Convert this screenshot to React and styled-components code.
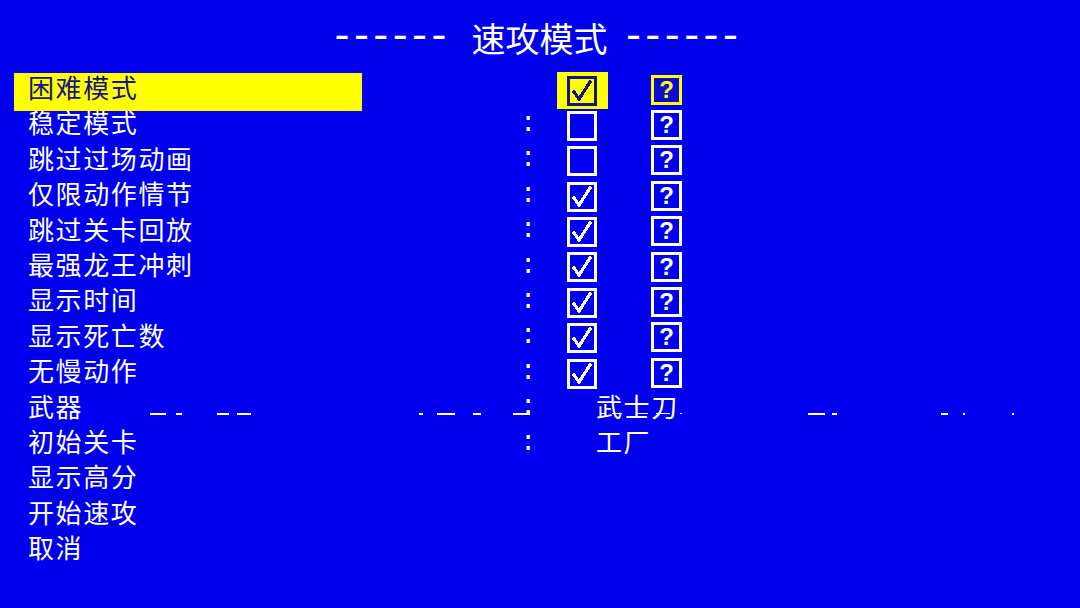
import React from "react";
import styled, { createGlobalStyle } from "styled-components";

const BLUE = "#0000ee";
const YELLOW = "#ffff00";
const NAVY = "#14148a";
const WHITE = "#ffffff";
const CJK = `"Noto Sans CJK SC", "Noto Sans", sans-serif`;

const Global = createGlobalStyle`
  html, body {
    margin: 0;
    padding: 0;
    background: ${BLUE};
  }
  body {
    font-family: ${CJK};
    overflow: hidden;
  }
`;

const Screen = styled.div`
  width: 1080px;
  height: 608px;
  background: ${BLUE};
  color: ${WHITE};
  display: flex;
  flex-direction: column;
`;

const Header = styled.header`
  display: flex;
  justify-content: flex-start;
  align-items: flex-start;
  padding: 21px 0 0 330px;
  height: 34px;
  margin-bottom: 17px;
`;

const Dashes = styled.span`
  font-family: "Liberation Mono", monospace;
  font-size: 40px;
  line-height: 34px;
  letter-spacing: -4.6px;
  white-space: nowrap;
  margin: ${(p) => (p.$side === "left" ? "0 25px 0 0" : "0 0 0 14px")};
`;

const Heading = styled.h1`
  margin: 0;
  font-family: ${CJK};
  font-weight: 400;
  font-size: 34px;
  line-height: 34px;
`;

const Menu = styled.div`
  display: flex;
  flex-direction: column;
`;

const Row = styled.div`
  position: relative;
  display: grid;
  grid-template-columns: 348px 152px 24px 19px 51px 43px 31px 1fr;
  grid-template-rows: 35.4px;
  padding-left: 14px;
  align-items: center;
`;

const Label = styled.div`
  grid-column: 1;
  align-self: start;
  height: 38px;
  margin-top: 1px;
  box-sizing: border-box;
  padding: 1px 0 0 14px;
  font-size: 26px;
  line-height: 26px;
  letter-spacing: 1.6px;
  white-space: nowrap;
  color: ${(p) => (p.$active ? NAVY : WHITE)};
  background: ${(p) => (p.$active ? YELLOW : "transparent")};
`;

const Colon = styled.span`
  grid-column: 3;
  text-align: center;
  font-family: "Liberation Mono", monospace;
  font-weight: 400;
  font-size: 27px;
  line-height: 27px;
  margin-left: 4px;
  margin-top: -1px;
`;

const CheckCell = styled.div`
  grid-column: 5;
  align-self: start;
  height: 37px;
  display: flex;
  align-items: center;
  justify-content: center;
  padding-right: 2px;
  background: ${(p) => (p.$active ? YELLOW : "transparent")};
`;

const Box = styled.div`
  width: 30px;
  height: 30px;
  box-sizing: border-box;
  border: 3px solid ${(p) => (p.$active ? NAVY : WHITE)};
  display: flex;
  align-items: center;
  justify-content: center;
  color: ${(p) => (p.$active ? NAVY : WHITE)};
`;

const HelpBox = styled.div`
  grid-column: 7;
  width: 31px;
  height: 30px;
  box-sizing: border-box;
  border: 3px solid ${(p) => (p.$active ? YELLOW : WHITE)};
  background: ${(p) => (p.$active ? "#0a0ad2" : "transparent")};
  color: ${(p) => (p.$active ? YELLOW : WHITE)};
  display: flex;
  align-items: center;
  justify-content: center;
  font-family: "Liberation Sans", sans-serif;
  font-weight: 700;
  font-size: 24px;
  line-height: 24px;
`;

const Value = styled.div`
  grid-column: 5 / -1;
  align-self: start;
  margin-top: 1px;
  padding: 1px 0 0 39px;
  font-size: 26px;
  line-height: 26px;
  letter-spacing: 1.6px;
  white-space: nowrap;
`;

const Glitch = styled.svg`
  position: absolute;
  left: 0;
  top: 20px;
  width: 1080px;
  height: 6px;
  pointer-events: none;
`;

const CheckMark = () => (
  <svg width="22" height="22" viewBox="0 0 22 22" shapeRendering="crispEdges">
    <polyline
      points="3,12 8,19 19,2"
      fill="none"
      stroke="currentColor"
      strokeWidth="3.2"
      strokeLinecap="square"
      strokeLinejoin="miter"
    />
  </svg>
);

const glitchSegments = [
  [150, 16, 2], [176, 6, 2], [217, 12, 2], [237, 14, 2],
  [419, 4, 2], [437, 18, 2], [473, 8, 2], [513, 17, 2],
  [600, 6, 1], [612, 10, 1], [636, 12, 1], [656, 14, 1], [680, 2, 1],
  [808, 17, 2], [832, 5, 2], [941, 7, 2], [963, 2, 2], [1012, 2, 2],
];

const GlitchLine = () => (
  <Glitch viewBox="0 0 1080 6" shapeRendering="crispEdges">
    {glitchSegments.map(([x, w, h], i) => (
      <rect key={i} x={x} y={2} width={w} height={h} fill={WHITE} />
    ))}
  </Glitch>
);

const rows = [
  { label: "困难模式", check: true, active: true, colon: false },
  { label: "稳定模式", check: false },
  { label: "跳过过场动画", check: false },
  { label: "仅限动作情节", check: true },
  { label: "跳过关卡回放", check: true },
  { label: "最强龙王冲刺", check: true },
  { label: "显示时间", check: true },
  { label: "显示死亡数", check: true },
  { label: "无慢动作", check: true },
  { label: "武器", value: "武士刀", glitch: true },
  { label: "初始关卡", value: "工厂" },
  { label: "显示高分", action: true },
  { label: "开始速攻", action: true },
  { label: "取消", action: true },
];

export default function App() {
  return (
    <>
      <Global />
      <Screen>
        <Header>
          <Dashes $side="left">------</Dashes>
          <Heading>速攻模式</Heading>
          <Dashes $side="right">------</Dashes>
        </Header>
        <Menu>
          {rows.map((r) => {
            const isToggle = typeof r.check === "boolean";
            const showColon = !r.action && r.colon !== false;
            return (
              <Row key={r.label}>
                <Label $active={r.active}>{r.label}</Label>
                {showColon && <Colon>:</Colon>}
                {isToggle && (
                  <>
                    <CheckCell $active={r.active}>
                      <Box $active={r.active}>{r.check && <CheckMark />}</Box>
                    </CheckCell>
                    <HelpBox $active={r.active}>?</HelpBox>
                  </>
                )}
                {r.value && <Value>{r.value}</Value>}
                {r.glitch && <GlitchLine />}
              </Row>
            );
          })}
        </Menu>
      </Screen>
    </>
  );
}
